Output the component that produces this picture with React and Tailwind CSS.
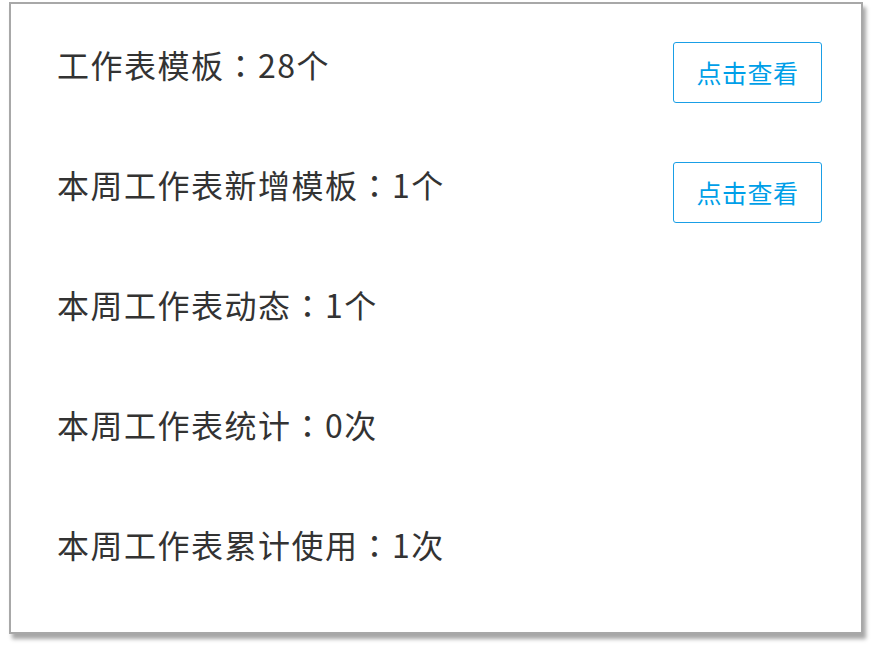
import React from "react";

const rows = [
  { name: "工作表模板", value: "28个", action: true },
  { name: "本周工作表新增模板", value: "1个", action: true },
  { name: "本周工作表动态", value: "1个" },
  { name: "本周工作表统计", value: "0次" },
  { name: "本周工作表累计使用", value: "1次" },
];

function StatRow({ name, value, action }) {
  return (
    <div className="h-[120px] flex items-center justify-between">
      <span className="mb-[8px] text-[32px] leading-none text-[#333] tracking-[1.5px]">
        {name}
        {/* centered full-width colon */}
        <span style={{ fontFamily: '"Noto Sans CJK JP", sans-serif' }}>：</span>
        {value}
      </span>
      {action && (
        <button className="mt-[9px] w-[149px] h-[61px] border border-[#1a9fe6] rounded-[3px] bg-white text-[#009fe8] text-[25px] leading-none tracking-[0.5px] flex items-center justify-center">
          点击查看
        </button>
      )}
    </div>
  );
}

export default function App() {
  return (
    <div
      className="w-[872px] h-[650px] bg-white pt-[2px] pl-[9px]"
      style={{ fontFamily: '"Noto Sans CJK SC", "Noto Sans", sans-serif' }}
    >
      <div className="w-[854px] h-[632px] bg-white border-2 border-[#a8a8a8] shadow-[3px_5px_4px_rgba(0,0,0,0.35)] pl-[46px] pr-[39px] pt-[4px]">
        {rows.map((row, i) => (
          <StatRow key={i} {...row} />
        ))}
      </div>
    </div>
  );
}
